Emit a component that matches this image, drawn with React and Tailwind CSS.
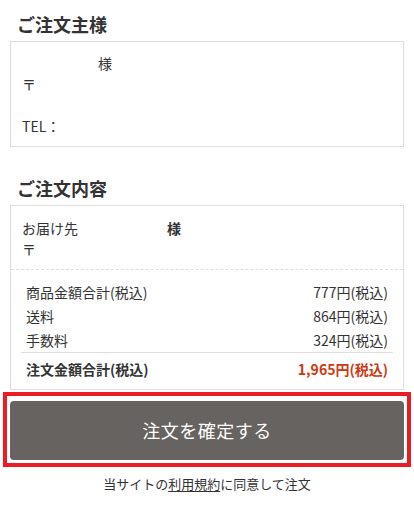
const font = { fontFamily: '"Noto Sans CJK JP", "Noto Sans", sans-serif' };

const rows = [
  { label: '商品金額合計(税込)', value: '777円(税込)' },
  { label: '送料', value: '864円(税込)' },
  { label: '手数料', value: '324円(税込)' },
];

function Heading({ children }) {
  return (
    <h2 className="px-[7px] mb-[5px] text-[18px] leading-[24px] font-bold text-[#333]">
      {children}
    </h2>
  );
}

export default function App() {
  return (
    <div className="w-[414px] bg-white text-[#333] pt-[12px]" style={font}>
      <div className="px-[10px]">
        <Heading>ご注文主様</Heading>
        <div className="border border-[#dddddd] px-[11px] pt-[11px] pb-[9px] text-[14px] leading-[21px]">
          <p>
            <span className="inline-block w-[76px]"></span>様
          </p>
          <p>〒</p>
          <p>&nbsp;</p>
          <p>TEL：</p>
        </div>

        <div className="mt-[29px]">
          <Heading>ご注文内容</Heading>
        </div>
        <div className="border border-[#dddddd]">
          <div className="px-[11px] pt-[12px] pb-[9px] text-[14px] leading-[21px] border-b border-dashed border-[#dddddd]">
            <p className="flex">
              <span className="w-[145px]">お届け先</span>
              <span className="font-bold">様</span>
            </p>
            <p>〒</p>
          </div>
          <div className="px-[10px] pt-[10px] pb-[8px] text-[14px]">
            <div className="px-[5px] border-b border-[#dddddd]">
              {rows.map((r) => (
                <div key={r.label} className="flex justify-between h-[24px] leading-[24px]">
                  <span>{r.label}</span>
                  <span>{r.value}</span>
                </div>
              ))}
            </div>
            <div className="px-[5px] pt-[4px] flex justify-between leading-[24px] font-bold">
              <span>注文金額合計(税込)</span>
              <span className="text-[#cc3a10]">1,965円(税込)</span>
            </div>
          </div>
        </div>
      </div>

      <div className="mt-[2px] ml-[3px] w-[408px] border-4 border-[#ec1c24] pt-[5px] px-[3px] pb-[3px]">
        <button className="w-full h-[59px] rounded-[4px] bg-[#676360] text-white text-[18px] tracking-[0.5px]">
          注文を確定する
        </button>
      </div>

      <p className="mt-[7px] text-center text-[13px] leading-[20px] pb-[10px]">
        当サイトの<span className="underline underline-offset-2">利用規約</span>に同意して注文
      </p>
    </div>
  );
}
